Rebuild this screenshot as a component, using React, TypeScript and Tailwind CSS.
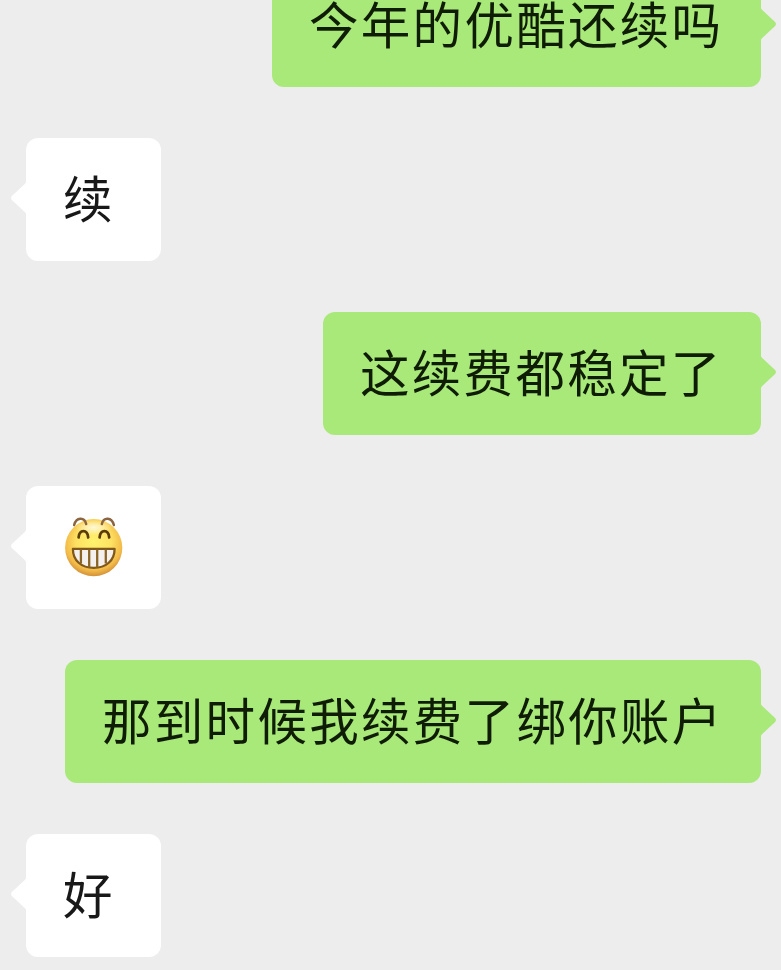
import React from "react";

type Message = { text?: string; mine?: boolean; width: string };

const messages: Message[] = [
  { text: "今年的优酷还续吗", mine: true, width: "w-[489px]" },
  { text: "续", width: "w-[135px]" },
  { text: "这续费都稳定了", mine: true, width: "w-[438px]" },
  { width: "w-[135px]" },
  { text: "那到时候我续费了绑你账户", mine: true, width: "w-[696px]" },
  { text: "好", width: "w-[135px]" },
];

function Grin() {
  return (
    <svg viewBox="14 15.5 60 64" className="ml-px h-16 w-[60px]" role="img" aria-label="grin">
      <defs>
        <radialGradient id="face" cx="50%" cy="40%" r="62%">
          <stop offset="0" stopColor="#fff36e" />
          <stop offset=".5" stopColor="#fde162" />
          <stop offset=".8" stopColor="#f3bb49" />
          <stop offset="1" stopColor="#cc8836" />
        </radialGradient>
        <radialGradient id="shine">
          <stop offset="0" stopColor="#fff" stopOpacity=".75" />
          <stop offset="1" stopColor="#fff" stopOpacity="0" />
        </radialGradient>
      </defs>
      <circle cx="43.7" cy="47.2" r="28.6" fill="url(#face)" />
      <ellipse cx="43.7" cy="27" rx="19" ry="8" fill="url(#shine)" />
      <g fill="none" strokeLinecap="round">
        <path d="M24.1 24.6C26.2 16.5 34.4 16.2 36.2 23.6M51.8 23.6C53.6 16.2 61.8 16.5 63.9 24.6" stroke="#8a6540" strokeWidth="2.4" />
        <path d="M28.6 37C29.4 28.6 37.4 28.6 38.2 37M49.6 37C50.4 28.6 58.4 28.6 59.2 37" stroke="#5a3d08" strokeWidth="2.7" />
      </g>
      <path d="M22.9 48.4H64.6C64.6 60 56 67.4 43.7 67.4S22.9 60 22.9 48.4Z" fill="#f3f0ee" stroke="#80591a" strokeWidth="2.3" strokeLinejoin="round" />
      <path d="M30.9 49V63M39.2 49V67M47.2 49V67M55.8 49V63" stroke="#8a6425" strokeWidth="2.3" />
    </svg>
  );
}

function Bubble({ message }: { message: Message }) {
  const { text, mine, width } = message;
  return (
    <div className={`relative flex h-[123px] items-center rounded-[12px] pl-[37px] ${width} ${mine ? "self-end bg-[#a9e97a] text-[#0f1d06]" : "self-start bg-white text-[#181818]"}`}>
      <svg viewBox="0 0 16 36" className={`absolute top-[42px] h-9 w-4 ${mine ? "-right-[15px] text-[#a9e97a]" : "-left-[15px] -scale-x-100 text-white"}`}>
        <path d="M0 0C.5 1.5 1.2 3 2.5 4.2L14.6 15.4Q17.4 18 14.6 20.6L2.5 31.8C1.2 33 .5 34.5 0 36Z" fill="currentColor" />
      </svg>
      {text ? <span className="-mt-[5px] whitespace-nowrap text-[49.5px] leading-[60px] tracking-[2.3px]">{text}</span> : <Grin />}
    </div>
  );
}

export default function App() {
  return (
    <main className="h-[970px] w-[781px] overflow-hidden bg-[#ededed] font-['Noto_Sans_CJK_SC',sans-serif]">
      <div className="-mt-9 flex flex-col gap-[51px] pr-5 pl-[26px]">
        {messages.map((message, i) => <Bubble key={i} message={message} />)}
      </div>
    </main>
  );
}
